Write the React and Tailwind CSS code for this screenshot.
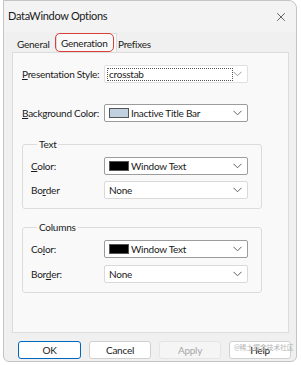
import { X } from 'lucide-react';

// Small chevron used by the combo boxes
const Chevron = ({ light }) => (
  <svg width="9" height="6" viewBox="0 0 9 6" className="shrink-0">
    <path d="M0.5 0.8 L4.5 4.8 L8.5 0.8" fill="none" stroke={light ? '#9a9a9a' : '#606060'} strokeWidth="1" />
  </svg>
);

const Combo = ({ swatch, text, dark }) => (
  <div
    className={`w-[144px] h-[18px] bg-white rounded-[2px] border flex items-center pl-[4px] pr-[5px] ${
      dark ? 'border-[#9c9c9c]' : 'border-[#d9d9d9]'
    }`}
  >
    {swatch && <div className={`w-[20px] h-[10px] border border-[#555] mr-[2px] ${swatch}`} />}
    <span className="flex-1 leading-none truncate">{text}</span>
    <Chevron />
  </div>
);

const Label = ({ pre, u, post, width }) => (
  <div className={`${width} shrink-0 whitespace-nowrap`}>
    {pre}
    <span className="underline underline-offset-[1px]">{u}</span>
    {post}
  </div>
);

export default function App() {
  return (
    <div
      className="relative w-[301px] h-[365px] bg-white overflow-hidden text-[10px] tracking-[-0.25px] text-[#1a1a1a]"
      style={{ fontFamily: 'Lato, "Noto Sans CJK SC", sans-serif' }}
    >
      <div className="ml-[3px] w-[294px] h-[362px] bg-[#f0f0f0] border border-[#c4c4c4] rounded-tr-[8px] rounded-b-[6px] flex flex-col">
        {/* Title bar */}
        <div className="h-[31px] flex items-center pl-[4px] pr-[8px] bg-[#f3f3f3] rounded-tr-[8px]">
          <span className="flex-1 text-[11px] tracking-[-0.3px]">DataWindow Options</span>
          <X size={14} strokeWidth={1.3} className="text-[#333]" />
        </div>

        {/* Tabs */}
        <div className="flex items-end h-[19px] pl-[11px] mt-[1px] whitespace-nowrap">
          <div className="h-[16px] w-[41px] pl-[2px] flex items-center">General</div>
          <div className="h-[19px] w-[61px] pl-[4px] flex items-center bg-[#f9f9f9] border border-b-0 border-[#dcdcdc]">
            Generation
          </div>
          <div className="h-[16px] pl-[1px] flex items-center">Prefixes</div>
        </div>

        {/* Tab panel */}
        <div className="ml-[8px] w-[277px] h-[281px] bg-[#f9f9f9] border border-[#dcdcdc] pt-[12px] pl-[9px]">
          <div className="flex items-center">
            <Label u="P" post="resentation Style:" width="w-[82px]" />
            <div className="w-[144px] h-[18px] bg-white border border-[#e0e0e0] rounded-[2px] flex items-center pl-[2px] pr-[5px]">
              <div className="w-[126px] h-[13px] border border-dotted border-[#555] flex items-center pl-[1px] leading-none">
                crosstab
              </div>
              <div className="flex-1" />
              <Chevron light />
            </div>
          </div>

          <div className="flex items-center mt-[21px]">
            <Label u="B" post="ackground Color:" width="w-[82px]" />
            <Combo swatch="bg-[#c2d1e0]" text="Inactive Title Bar" dark />
          </div>

          <fieldset className="w-[240px] mt-[14px] border border-[#dcdcdc] rounded-[3px] pl-[8px] pb-[9px]">
            <legend className="ml-[6px] px-[2px] leading-[16px]">Text</legend>
            <div className="flex items-center mt-[5px]">
              <Label u="C" post="olor:" width="w-[73px]" />
              <Combo swatch="bg-black" text="Window Text" dark />
            </div>
            <div className="flex items-center mt-[6px]">
              <Label pre="Bo" u="r" post="der" width="w-[73px]" />
              <Combo text="None" />
            </div>
          </fieldset>

          <fieldset className="w-[240px] mt-[10px] border border-[#dcdcdc] rounded-[3px] pl-[8px] pb-[9px]">
            <legend className="ml-[6px] px-[2px] leading-[16px]">Columns</legend>
            <div className="flex items-center mt-[5px]">
              <Label pre="Co" u="l" post="or:" width="w-[73px]" />
              <Combo swatch="bg-black" text="Window Text" dark />
            </div>
            <div className="flex items-center mt-[7px]">
              <Label pre="Bor" u="d" post="er:" width="w-[73px]" />
              <Combo text="None" />
            </div>
          </fieldset>
        </div>

        {/* Buttons */}
        <div className="flex mt-[8px] pl-[14px] gap-[8px]">
          <button className="w-[63px] h-[18px] bg-white border border-[#0067c0] rounded-[3px] leading-none">OK</button>
          <button className="w-[62px] h-[18px] bg-white border border-[#d0d0d0] rounded-[3px] leading-none">Cancel</button>
          <button className="w-[62px] h-[18px] bg-[#f5f5f5] border border-[#e5e5e5] rounded-[3px] leading-none text-[#a8a8a8]">
            Apply
          </button>
          <button className="w-[62px] h-[18px] bg-white border border-[#d0d0d0] rounded-[3px] leading-none">Help</button>
        </div>
      </div>

      {/* Red annotation around the active tab */}
      <div className="absolute left-[55px] top-[33px] w-[59px] h-[19px] border-[1.5px] border-[#d9403a] rounded-[5px]" />

      {/* Watermark */}
      <div className="absolute left-[234px] top-[344px] text-[7px] text-[#b5b5b5] leading-none">@稀土掘金技术社区</div>
    </div>
  );
}
